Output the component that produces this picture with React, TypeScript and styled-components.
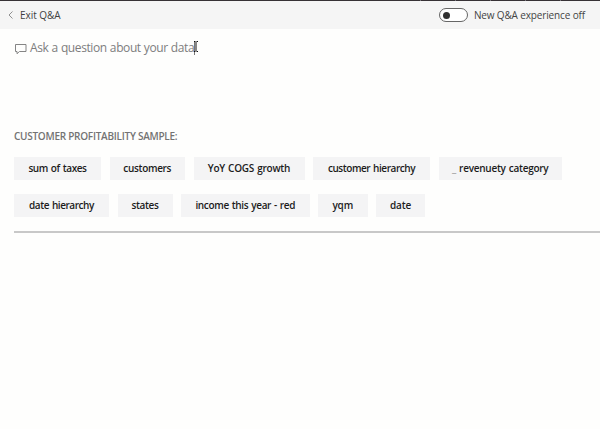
import React from "react";
import styled, { createGlobalStyle } from "styled-components";

const GlobalStyle = createGlobalStyle`
  * { box-sizing: border-box; }
  body {
    margin: 0;
    background: #fefefd;
    font-family: "Open Sans", "Noto Sans", sans-serif;
    overflow: hidden;
  }
`;

const Page = styled.div`
  width: 600px;
  height: 429px;
  overflow: hidden;
  background: #fefefd;
`;

const TopEdge = styled.div`
  display: flex;
  justify-content: flex-end;
  gap: 34px;
  height: 1px;
  padding-right: 39px;
  background: #373236;
`;

const Tick = styled.span`
  width: 1px;
  height: 1px;
  background: #77737a;
`;

const Header = styled.header`
  display: flex;
  align-items: center;
  justify-content: space-between;
  height: 28px;
  padding: 0 15px 0 8px;
  background: #f5f5f5;
`;

const ExitButton = styled.button`
  display: flex;
  align-items: center;
  gap: 7px;
  padding: 0;
  border: 0;
  background: none;
  color: #3f3f3f;
  font: 400 10px/14px "Open Sans", sans-serif;
  white-space: nowrap;
`;

const ToggleLabel = styled.label`
  display: flex;
  align-items: center;
  gap: 6px;
  color: #444;
  font-size: 10px;
  line-height: 14px;
  white-space: nowrap;
`;

const Switch = styled.span`
  display: flex;
  align-items: center;
  width: 29px;
  height: 14px;
  padding-left: 3px;
  border: 1px solid #666;
  border-radius: 7px;
  background: #fff;
`;

const Knob = styled.span`
  width: 7px;
  height: 7px;
  border-radius: 50%;
  background: #303030;
`;

const Question = styled.div`
  display: flex;
  align-items: center;
  height: 18px;
  margin: 10px 0 0 14px;
`;

const Placeholder = styled.span`
  margin-left: 2px;
  color: #7d7d7d;
  font-size: 12px;
  line-height: 18px;
  letter-spacing: -0.4px;
  word-spacing: 0.4px;
  white-space: nowrap;
`;

const Label = styled.span<{ $spacing: number }>`
  letter-spacing: ${(p) => p.$spacing}px;
`;

const Suggestions = styled.section`
  margin: 72px 0 0 14px;
  height: 104px;
  border-bottom: 2px solid #c8c8c8;
`;

const Title = styled.h2`
  margin: 0 0 14px;
  color: #737373;
  font-size: 10px;
  font-weight: 600;
  line-height: 14px;
  letter-spacing: -0.26px;
  white-space: nowrap;
`;

const ChipRow = styled.div`
  display: flex;
  gap: 8.5px;
  margin-bottom: 14px;
`;

const Chip = styled.button<{ $width: number; $spacing: number }>`
  flex: none;
  width: ${(p) => p.$width}px;
  height: 23px;
  padding: 0;
  border: 0;
  background: #f4f4f5;
  color: #1c1c1c;
  font: 600 10px/23px "Open Sans", sans-serif;
  letter-spacing: ${(p) => p.$spacing}px;
  word-spacing: 0.7px;
  text-align: center;
  white-space: nowrap;
`;

const Blank = styled.span`
  color: #999;
`;

type Suggestion = { text: string; width: number; spacing: number; blank?: boolean };

const rows: Suggestion[][] = [
  [
    { text: "sum of taxes", width: 87, spacing: -0.4 },
    { text: "customers", width: 75.5, spacing: -0.33 },
    { text: "YoY COGS growth", width: 111, spacing: -0.24 },
    { text: "customer hierarchy", width: 117, spacing: -0.44 },
    { text: "revenuety category", width: 123.5, spacing: -0.26, blank: true },
  ],
  [
    { text: "date hierarchy", width: 95, spacing: -0.44 },
    { text: "states", width: 55, spacing: -0.36 },
    { text: "income this year - red", width: 128.5, spacing: -0.35 },
    { text: "yqm", width: 49.5, spacing: -0.15 },
    { text: "date", width: 49, spacing: -0.2 },
  ],
];

export default function App() {
  return (
    <>
      <GlobalStyle />
      <Page>
        <TopEdge>
          {[0, 1, 2, 3, 4].map((n) => (
            <Tick key={n} />
          ))}
        </TopEdge>
        <Header>
          <ExitButton>
            <svg width="5" height="8" viewBox="0 0 5 8" fill="none" stroke="#858585" strokeWidth="0.9">
              <path d="M4.500 .5 1 4l3.500 3.500" />
            </svg>
            <Label $spacing={-0.05}>Exit Q&amp;A</Label>
          </ExitButton>
          <ToggleLabel>
            <Switch>
              <Knob />
            </Switch>
            <Label $spacing={-0.14}>New Q&amp;A experience off</Label>
          </ToggleLabel>
        </Header>
        <Question>
          <svg width="14" height="12" viewBox="0 0 14 12" fill="none" stroke="#777" strokeWidth="0.9">
            <path d="M1.500 2.500h10.500v7H5.500L3 11.700V9.500H1.500z" />
          </svg>
          <Placeholder>Ask a question about your data</Placeholder>
          <svg width="5" height="18" viewBox="0 0 5 18" fill="none" strokeWidth="1">
            <path d="M.5 3v13" stroke="#777" />
            <path d="M0 2.500h1.500M2.500 2.500H4M2 3v9M0 12.500h1.500M2.500 12.500H4" stroke="#111" />
          </svg>
        </Question>
        <Suggestions>
          <Title>CUSTOMER PROFITABILITY SAMPLE:</Title>
          {rows.map((row, i) => (
            <ChipRow key={i}>
              {row.map((s) => (
                <Chip key={s.text} $width={s.width} $spacing={s.spacing}>
                  {s.blank && <Blank>_ </Blank>}
                  {s.text}
                </Chip>
              ))}
            </ChipRow>
          ))}
        </Suggestions>
      </Page>
    </>
  );
}
